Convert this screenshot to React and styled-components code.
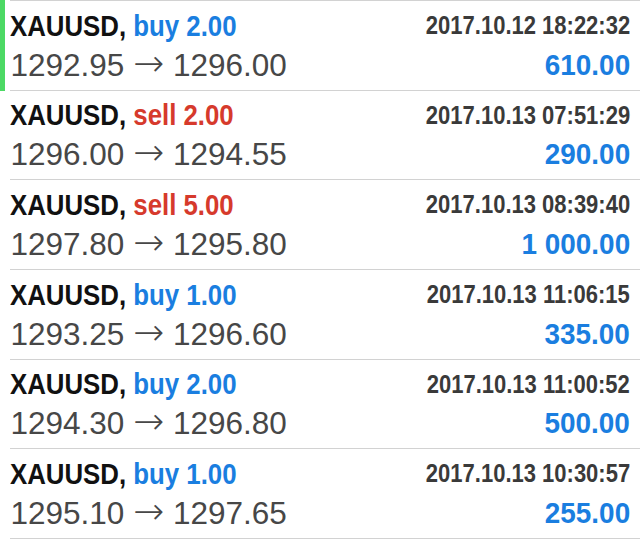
import React from 'react';
import styled, { createGlobalStyle } from 'styled-components';

const GlobalStyle = createGlobalStyle`
  html, body {
    margin: 0;
    padding: 0;
    background: #ffffff;
  }
  body {
    font-family: 'Liberation Sans', Arial, sans-serif;
    width: 640px;
    height: 540px;
    overflow: hidden;
  }
`;

const List = styled.div`
  display: flex;
  flex-direction: column;
  width: 640px;
`;

const Row = styled.div`
  display: flex;
  flex-direction: row;
`;

const Marker = styled.div`
  width: 5px;
  flex-shrink: 0;
  background-color: ${({ active }) => (active ? '#4cd964' : 'transparent')};
`;

const Body = styled.div`
  flex: 1;
  margin-left: 5px;
  height: 88.7px;
  display: grid;
  grid-template-columns: 1fr auto;
  grid-template-rows: 39.5px 39px;
  align-content: start;
  padding-right: 10px;
  border-bottom: 1px solid #d2d2d2;
  border-top: ${({ first }) => (first ? '1px solid #d2d2d2' : 'none')};
`;

// condensed bold face, approximated by squeezing Liberation Sans Bold
const Title = styled.div`
  font-weight: bold;
  font-size: 30px;
  color: #111111;
  align-self: end;
  line-height: 30px;
  white-space: nowrap;
  transform: scaleX(0.86);
  transform-origin: left center;
`;

const Side = styled.span`
  color: ${({ sell }) => (sell ? '#d63a2c' : '#1a7ee0')};
`;

const Stamp = styled.div`
  font-weight: bold;
  font-size: 25px;
  color: #3a3a3a;
  align-self: end;
  text-align: right;
  line-height: 26px;
  margin-bottom: 2.5px;
  white-space: nowrap;
  transform: scaleX(0.88);
  transform-origin: right center;
`;

const Prices = styled.div`
  font-size: 31.5px;
  color: #474747;
  align-self: end;
  line-height: 30px;
  padding-left: 0.5px;
  white-space: nowrap;
`;

const Arrow = styled.span`
  font-family: 'DejaVu Sans', sans-serif;
  font-weight: 200;
  font-size: 37px;
  line-height: 0;
  color: #474747;
`;

const Amount = styled.div`
  font-weight: bold;
  font-size: 30px;
  color: #1a7ee0;
  align-self: end;
  text-align: right;
  line-height: 30px;
  white-space: nowrap;
  transform: scaleX(0.93);
  transform-origin: right center;
`;

const trades = [
  { side: 'buy', vol: '2.00', time: '2017.10.12 18:22:32', open: '1292.95', close: '1296.00', profit: '610.00', active: true },
  { side: 'sell', vol: '2.00', time: '2017.10.13 07:51:29', open: '1296.00', close: '1294.55', profit: '290.00' },
  { side: 'sell', vol: '5.00', time: '2017.10.13 08:39:40', open: '1297.80', close: '1295.80', profit: '1 000.00' },
  { side: 'buy', vol: '1.00', time: '2017.10.13 11:06:15', open: '1293.25', close: '1296.60', profit: '335.00' },
  { side: 'buy', vol: '2.00', time: '2017.10.13 11:00:52', open: '1294.30', close: '1296.80', profit: '500.00' },
  { side: 'buy', vol: '1.00', time: '2017.10.13 10:30:57', open: '1295.10', close: '1297.65', profit: '255.00' },
];

export default function App() {
  return (
    <>
      <GlobalStyle />
      <List>
        {trades.map((t, i) => (
          <Row key={i}>
            <Marker active={t.active} />
            <Body first={i === 0}>
              <Title>
                XAUUSD, <Side sell={t.side === 'sell'}>{t.side} {t.vol}</Side>
              </Title>
              <Stamp>{t.time}</Stamp>
              <Prices>
                {t.open} <Arrow>→</Arrow> {t.close}
              </Prices>
              <Amount>{t.profit}</Amount>
            </Body>
          </Row>
        ))}
      </List>
    </>
  );
}
